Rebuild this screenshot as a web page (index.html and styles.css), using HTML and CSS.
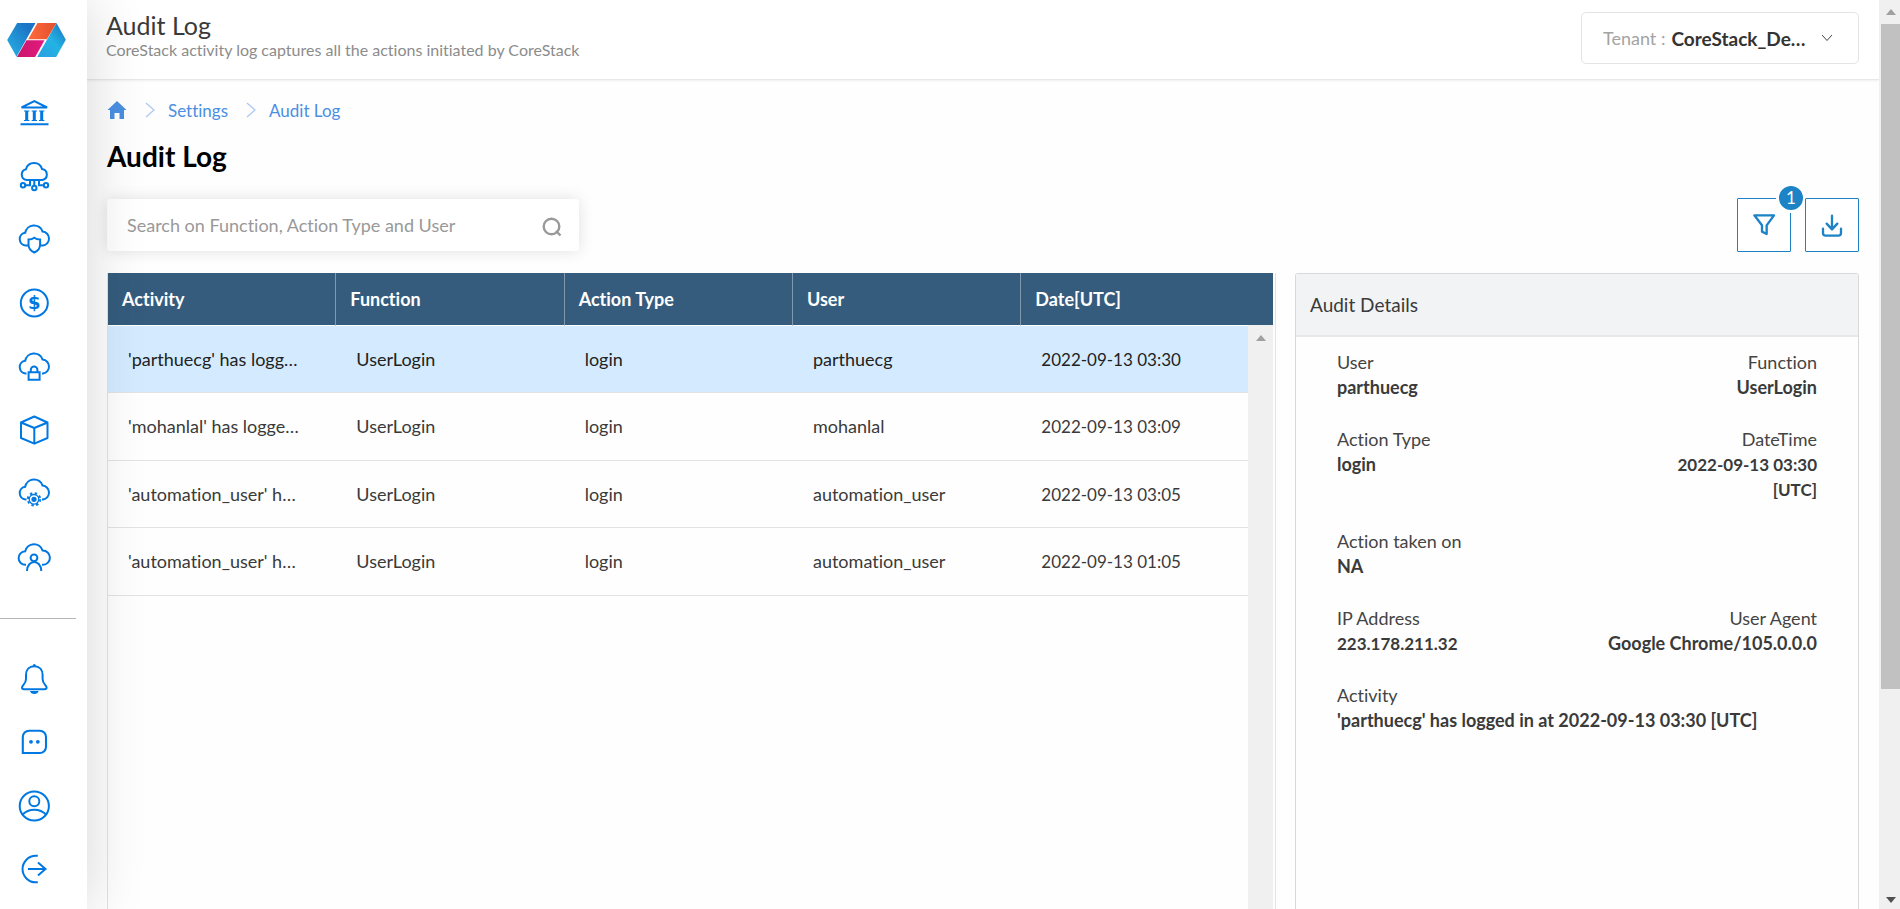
FILE: index.html
```html
<!DOCTYPE html>
<html lang="en">
<head>
<meta charset="utf-8">
<title>Audit Log</title>
<link rel="stylesheet" href="styles.css">
</head>
<body>
<div class="app">
  <nav class="sidebar" aria-label="Main">
    <a href="#" class="logo" aria-label="CoreStack">
      <svg viewBox="21 69 176 102" width="59" height="34">
        <defs>
          <linearGradient id="blueLeft" x1="1" y1="0" x2="0" y2="1"><stop offset="0.2" stop-color="#1b74c5"/><stop offset="1" stop-color="#27b4e6"/></linearGradient>
          <linearGradient id="blueRight" x1="0" y1="1" x2="1" y2="0"><stop offset="0" stop-color="#2b9fe0"/><stop offset="0.5" stop-color="#23b3e4"/><stop offset="1" stop-color="#1a6fc0"/></linearGradient>
          <linearGradient id="orange"><stop offset="0" stop-color="#ff6a3e"/><stop offset="1" stop-color="#e2502a"/></linearGradient>
          <linearGradient id="pink"><stop offset="0" stop-color="#c9186c"/><stop offset="1" stop-color="#e4187f"/></linearGradient>
        </defs>
        <path fill="url(#blueLeft)" d="M51 69h55L49 170 21 120z"/>
        <path fill="url(#orange)" d="M112 69h57l-29 49H84z"/>
        <path fill="url(#pink)" d="M79 121h54l-28 50H50z"/>
        <path fill="url(#blueRight)" d="M169 69l28 50-29 52h-57z"/>
      </svg>
    </a>
    <ul class="nav-main">
      <li><a href="#" aria-label="Governance"><svg viewBox="0 0 36 36"><path d="M5.500 13.500 18.300 7l12.800 6.500zM4.500 30.300h28"/><path d="M10.700 17v9.500M18.300 17v9.500M25.700 17v9.500" stroke-width="3"/><path d="M8 17h5.400M15.600 17H21M23 17h5.400M8 26.500h5.400M15.600 26.500H21M23 26.500h5.400" stroke-width="1"/></svg></a></li>
      <li><a href="#" aria-label="Cloud network"><svg viewBox="0 0 36 36"><path d="M10.500 22A5.500 5.500 0 0 1 10 11.200 8.300 8.300 0 0 1 26 11 5.600 5.600 0 0 1 26.500 22zM9.500 27.300H14V22M18.300 22v5.500M27.500 27.300H23V22"/><circle cx="7" cy="27.300" r="2.200"/><circle cx="18.300" cy="30" r="2.200"/><circle cx="30" cy="27.300" r="2.200"/></svg></a></li>
      <li><a href="#" aria-label="Cloud security"><svg viewBox="0 0 36 36"><path d="M12 24.500H9.500A6.400 6.400 0 0 1 9.200 11.800 9 9 0 0 1 26.600 10.600 7 7 0 0 1 27 24.500h-2"/><path d="M12.500 18.500c2.500 0 4.500-.8 5.800-1.800 1.300 1 3.300 1.800 5.800 1.800v5c0 4-2.500 6.500-5.800 8-3.300-1.500-5.800-4-5.800-8z"/></svg></a></li>
      <li><a href="#" aria-label="Cost"><svg viewBox="0 0 36 36"><circle cx="18.300" cy="18" r="13.500"/><text class="dollar" x="18.300" y="24" text-anchor="middle">$</text></svg></a></li>
      <li><a href="#" aria-label="Access"><svg viewBox="0 0 36 36"><path d="M10.500 25.500H9.500A6.400 6.400 0 0 1 9.200 12.800 9 9 0 0 1 26.600 11.600 7 7 0 0 1 27 25.500h-1"/><path d="M12.600 24.300h11v7.400h-11zM14.800 24v-2.200a3.300 3.300 0 0 1 6.600 0V24"/></svg></a></li>
      <li><a href="#" aria-label="Resources"><svg viewBox="0 0 36 36"><path stroke-linejoin="round" d="M18.300 4.500 31.500 10.500V26l-13.200 5.700L5 26V10.500zM5 10.500 18.300 16l13.200-5.500M18.300 16v15.700"/></svg></a></li>
      <li><a href="#" aria-label="Cloud operations"><svg viewBox="0 0 36 36"><path d="M10.500 24.500H9.500A6.400 6.400 0 0 1 9.200 11.800 9 9 0 0 1 26.600 10.600 7 7 0 0 1 27 24.500h-1"/><circle cx="18" cy="24.300" r="4.800" stroke-width="1.300"/><circle cx="18" cy="24.300" r="6.200" stroke-width="2" stroke-dasharray="2.400 2.470"/><circle class="solid" cx="18" cy="24.300" r="2.600"/></svg></a></li>
      <li><a href="#" aria-label="Cloud accounts"><svg viewBox="0 0 36 36"><path d="M10 25.800H9.500A6.400 6.400 0 0 1 9.200 12.300 9 9 0 0 1 26.600 11.600 7 7 0 0 1 27 25.800h-1"/><circle cx="18" cy="18.800" r="3.400"/><path d="M11 32c.3-12 14-12 14.300 0"/></svg></a></li>
    </ul>
    <hr class="divider">
    <ul class="nav-user">
      <li><a href="#" aria-label="Notifications"><svg viewBox="0 0 36 36"><path d="M18.300 5.200C13 5.200 10 9 10 14v4c0 5-4 6.200-4 8.600 0 1.400 1 1.700 2 1.700h20.600c1 0 2-.3 2-1.700 0-2.400-4-3.600-4-8.600v-4c0-5-3-8.800-8.300-8.800z"/><circle class="solid" cx="18.300" cy="4.500" r="1.500"/><path class="solid" d="M14 30h8.600c-.5 4-8.100 4-8.600 0z"/></svg></a></li>
      <li><a href="#" aria-label="Messages"><svg viewBox="0 0 36 36"><path stroke-width="2.100" d="M6.800 29V12.900a6.200 6.200 0 0 1 6.200-6.200h10.800a6.200 6.200 0 0 1 6.200 6.200v9.900a6.200 6.200 0 0 1-6.200 6.200z"/><circle class="solid" cx="15" cy="17.800" r="1.900"/><circle class="solid" cx="21.800" cy="17.800" r="1.900"/></svg></a></li>
      <li><a href="#" aria-label="Profile"><svg viewBox="0 0 36 36"><circle cx="18.300" cy="18" r="14.600"/><circle cx="18.300" cy="13.200" r="5"/><path d="M6.600 26.500c6-6.500 17.400-6.500 23.400 0"/></svg></a></li>
      <li><a href="#" aria-label="Log out"><svg viewBox="0 0 36 36"><path d="M21.800 4.800h-2A13.200 13.200 0 0 0 19.800 31.300h2M12 18h17.500M22 11.500l7.500 6.500L22 24.500"/></svg></a></li>
    </ul>
  </nav>

  <div class="main">
    <header class="topbar">
      <div>
        <p class="app-title">Audit Log</p>
        <p class="app-subtitle">CoreStack activity log captures all the actions initiated by CoreStack</p>
      </div>
      <div class="tenant">
        <label for="tenant">Tenant :</label>
        <select id="tenant"><option>CoreStack_De…</option></select>
        <svg viewBox="0 0 12 8" width="12" height="8"><path d="M1 1l5 5.500L11 1"/></svg>
      </div>
    </header>

    <main class="content">
      <nav class="crumbs" aria-label="Breadcrumb">
        <a href="#" aria-label="Home"><svg class="home" viewBox="0 0 20 20" width="20" height="20"><path d="M10 1 19.500 10H17v9h-4.500v-6h-5v6H3v-9H.5z"/></svg></a>
        <svg class="sep" viewBox="0 0 10 16" width="10" height="16"><path d="M1 1l8 7-8 7"/></svg>
        <a href="#">Settings</a>
        <svg class="sep" viewBox="0 0 10 16" width="10" height="16"><path d="M1 1l8 7-8 7"/></svg>
        <a href="#">Audit Log</a>
      </nav>
      <h1>Audit Log</h1>

      <div class="toolbar">
        <div class="search">
          <input type="search" aria-label="Search" placeholder="Search on Function, Action Type and User">
          <svg viewBox="0 0 20 20" width="20" height="20"><circle cx="9.500" cy="9.500" r="7.800"/><path d="M14 14l4.500 4.500"/></svg>
        </div>
        <div class="actions">
          <button type="button" class="tool" aria-label="Filter"><svg viewBox="636 640 72 72" width="24" height="24"><path d="M643 647h59l-22 30v26l-14-7v-19z"/></svg><span class="badge">1</span></button>
          <button type="button" class="tool" aria-label="Download"><svg viewBox="840 640 72 72" width="24" height="24"><path d="M876 648v40M860 672l16 17 16-17M849 687v13q0 8 8 8h38q8 0 8-8v-13"/></svg></button>
        </div>
      </div>

      <div class="panels">
        <section class="log">
          <table>
            <colgroup><col class="col"><col class="col"><col class="col"><col class="col"><col></colgroup>
            <thead><tr><th>Activity</th><th>Function</th><th>Action Type</th><th>User</th><th>Date[UTC]</th></tr></thead>
            <tbody>
              <tr class="selected"><td>'parthuecg' has logg…</td><td>UserLogin</td><td>login</td><td>parthuecg</td><td class="num">2022-09-13 03:30</td></tr>
              <tr><td>'mohanlal' has logge…</td><td>UserLogin</td><td>login</td><td>mohanlal</td><td class="num">2022-09-13 03:09</td></tr>
              <tr><td>'automation_user' h…</td><td>UserLogin</td><td>login</td><td>automation_user</td><td class="num">2022-09-13 03:05</td></tr>
              <tr><td>'automation_user' h…</td><td>UserLogin</td><td>login</td><td>automation_user</td><td class="num">2022-09-13 01:05</td></tr>
            </tbody>
          </table>
          <div class="log-scroll"><span class="arrow-up"></span></div>
        </section>

        <section class="details">
          <h2>Audit Details</h2>
          <dl>
            <div><dt>User</dt><dd>parthuecg</dd></div>
            <div class="end"><dt>Function</dt><dd>UserLogin</dd></div>
            <div><dt>Action Type</dt><dd>login</dd></div>
            <div class="end"><dt>DateTime</dt><dd class="num">2022-09-13 03:30<br>[UTC]</dd></div>
            <div class="wide"><dt>Action taken on</dt><dd>NA</dd></div>
            <div><dt>IP Address</dt><dd class="num">223.178.211.32</dd></div>
            <div class="end"><dt>User Agent</dt><dd>Google Chrome/105.0.0.0</dd></div>
            <div class="wide"><dt>Activity</dt><dd>'parthuecg' has logged in at 2022-09-13 03:30 [UTC]</dd></div>
          </dl>
        </section>
      </div>
    </main>
  </div>

  <div class="page-scroll">
    <span class="arrow-up"></span>
    <div class="track"><div class="thumb"></div></div>
    <span class="arrow-down"></span>
  </div>
</div>
</body>
</html>
```
FILE: styles.css
```css
* { box-sizing: border-box; }
body {
  margin: 0;
  font-family: Lato, "Open Sans", sans-serif;
  font-size: 18px;
  line-height: 25px;
  font-variant-ligatures: none;
  color: #3a3a3a;
  background: #fefefe;
}
p, h1, h2, ul, dl, dd { margin: 0; padding: 0; }
ul { list-style: none; }
svg { display: block; fill: none; }
a { text-decoration: none; }
.app { display: flex; height: 100vh; overflow: hidden; }

/* Sidebar */
.sidebar {
  flex: none;
  width: 87px;
  background: #fff;
  box-shadow: 0 0 60px rgba(0, 0, 0, .16);
  position: relative;
  z-index: 2;
}
.logo { display: block; padding: 23px 0 0 7px; }
.nav-main, .nav-user { display: flex; flex-direction: column; justify-content: space-between; padding-left: 16px; }
.nav-main { height: 481px; margin-top: 37px; }
.nav-user { height: 226px; margin-top: 42px; }
.sidebar li svg { width: 36px; height: 36px; stroke: #0078e1; stroke-width: 2; }
.sidebar li a { display: block; width: 36px; }
.sidebar .solid { fill: #0078e1; stroke: none; }
.dollar { font: bold 18px "DejaVu Sans", sans-serif; fill: #0078e1; stroke: none; }
.divider { width: 76px; height: 1px; margin: 43px 0 0; border: 0; background: #b5b5b5; }

/* Header */
.main { flex: 1; min-width: 0; display: flex; flex-direction: column; }
.topbar {
  flex: none;
  height: 80px;
  display: flex;
  justify-content: space-between;
  align-items: flex-start;
  padding: 12px 20px 0 19px;
  background: #fff;
  border-bottom: 1px solid #e8e8e8;
  box-shadow: 0 1px 2px rgba(0, 0, 0, .06);
}
.app-title { font-size: 25px; line-height: 27px; }
.app-subtitle { font-size: 16px; line-height: 21px; color: #8c8c8c; }
.tenant {
  display: flex;
  align-items: center;
  width: 278px;
  height: 52px;
  padding: 0 25px 0 21px;
  gap: 6px;
  border: 1px solid #e4e4e4;
  border-radius: 5px;
}
.tenant label { color: #a3a3a3; white-space: nowrap; }
.tenant select {
  flex: 1;
  min-width: 0;
  appearance: none;
  border: 0;
  padding: 0;
  background: none;
  font: bold 19px Lato, sans-serif;
  color: #333;
}
.tenant svg { stroke: #444; flex: none; }

/* Content */
.content { flex: 1; min-height: 0; display: flex; flex-direction: column; padding: 18px 20px 0; }
.crumbs { display: flex; align-items: center; gap: 13px; height: 24px; font-size: 17px; }
.crumbs a { color: #4a8fe3; }
.home { fill: #4a8fe3; }
.sep { stroke: #a9c7f0; stroke-width: 1.200; margin-left: 5px; }
h1 { margin-top: 17px; font-size: 28px; line-height: 34px; color: #000; }
.toolbar { display: flex; justify-content: space-between; margin-top: 25px; }
.search {
  display: flex;
  align-items: center;
  width: 472px;
  height: 52px;
  margin-top: 1px;
  padding: 0 17px 0 20px;
  background: #fff;
  border-radius: 3px;
  box-shadow: 0 0 16px rgba(0, 0, 0, .12);
}
.search input { flex: 1; border: 0; padding: 0; outline: 0; background: none; font: 18px Lato, sans-serif; font-variant-ligatures: none; color: #333; }
.search input::placeholder { color: #999; }
.search svg { stroke: #999; stroke-width: 2.400; margin-top: 4px; }
.actions { display: flex; gap: 14px; }
.tool {
  position: relative;
  display: flex;
  align-items: center;
  justify-content: center;
  width: 54px;
  height: 54px;
  padding: 0;
  background: #fff;
  border: 1px solid #1c83c6;
  border-radius: 1px;
}
.tool svg { stroke: #1c83c6; stroke-width: 7; stroke-linecap: round; stroke-linejoin: round; }
.badge {
  position: absolute;
  top: -16px;
  right: -16px;
  width: 30px;
  height: 30px;
  border: 3px solid #fff;
  border-radius: 50%;
  background: #1c83c6;
  color: #fff;
  font: 17px/24px Lato, sans-serif;
}

.panels { flex: 1; min-height: 0; display: grid; grid-template-columns: 1169fr 564fr; gap: 19px; margin-top: 21px; }
.log { position: relative; padding-right: 2px; border-left: 1px solid #e2e2e2; border-right: 1px solid #e2e2e2; }
table { width: 100%; table-layout: fixed; border-collapse: separate; border-spacing: 0; }
.col { width: 19.6%; }
th {
  height: 53px;
  padding: 0 14px;
  text-align: left;
  color: #fff;
  background: #355c7d;
  border-right: 1px solid #8199ae;
  border-bottom: 1px solid #fff;
}
th:last-child { border-right: 0; }
td { height: 67px; padding: 0 20px; white-space: nowrap; border-bottom: 1px solid #e3e3e3; }
tr:nth-child(even) td { height: 68px; }
.num { font-size: 17px; }
.selected td { background: #d4ebff; color: #222; }
.log-scroll {
  position: absolute;
  top: 52px;
  right: 2px;
  bottom: 0;
  width: 25px;
  padding-top: 10px;
  background: #f0f0f0;
}
.arrow-up, .arrow-down { display: block; margin: 0 auto; width: 10px; border: 5px solid transparent; }
.arrow-up { border-top: 0; border-bottom: 6px solid #a0a0a0; }
.arrow-down { border-bottom: 0; border-top: 6px solid #505050; }

.details { border: 1px solid #d9d9d9; border-bottom: 0; border-radius: 3px 3px 0 0; }
h2 {
  height: 63px;
  padding: 0 14px;
  font-size: 19px;
  font-weight: normal;
  line-height: 61px;
  background: #f1f3f5;
  border-bottom: 2px solid #e8e8e8;
}
dl { display: grid; grid-template-columns: auto auto; justify-content: space-between; row-gap: 27px; padding: 13px 41px; }
dt { color: #444; }
dd { font-weight: bold; }
.end { text-align: right; }
.wide { grid-column: 1 / -1; }

/* Window scroll bar */
.page-scroll {
  flex: none;
  display: flex;
  flex-direction: column;
  width: 21px;
  padding: 9px 0 6px 2px;
  background: #f0f0f0;
}
.track { flex: 1; margin: 9px 0; }
.thumb { height: 77%; background: #c1c1c1; }
```
